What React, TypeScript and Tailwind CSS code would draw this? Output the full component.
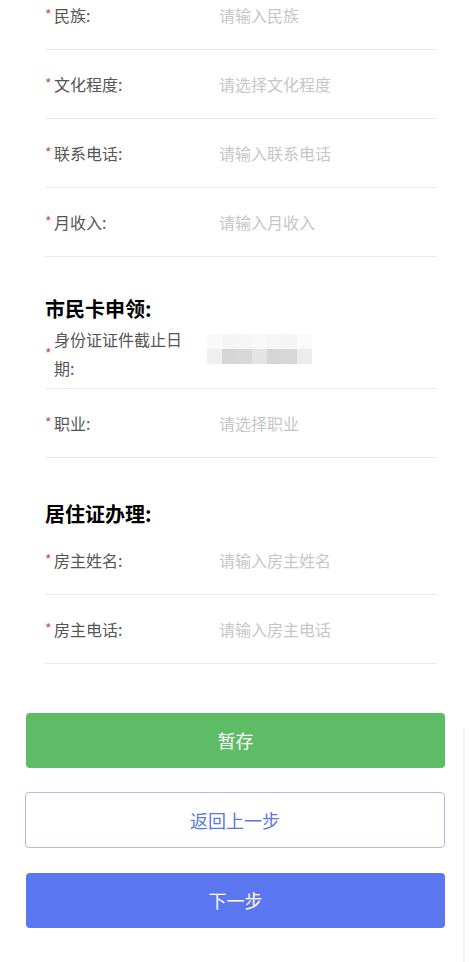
import React from 'react';

type Field = { label: string; placeholder: string };

const basicFields: Field[] = [
  { label: '民族', placeholder: '请输入民族' },
  { label: '文化程度', placeholder: '请选择文化程度' },
  { label: '联系电话', placeholder: '请输入联系电话' },
  { label: '月收入', placeholder: '请输入月收入' },
];

const ownerFields: Field[] = [
  { label: '房主姓名', placeholder: '请输入房主姓名' },
  { label: '房主电话', placeholder: '请输入房主电话' },
];

// pixelated (redacted) value blocks
const blurTop = ['#f9f9f9', '#f5f5f5', '#f6f6f6', '#f8f8f8', '#f6f6f6', '#f5f5f5', '#fafafa'];
const blurBottom = ['#efefef', '#d6d6d6', '#d8d8d8', '#e4e4e4', '#d5d5d5', '#d7d7d7', '#ececec'];

const FormRow: React.FC<{ label: React.ReactNode; children: React.ReactNode }> = ({ label, children }) => (
  <div className="h-[69px] flex items-center border-b border-[#e9e9e9]">
    <div className="w-[174px] shrink-0 flex items-center">
      <span className="w-[9px] shrink-0 text-[14px] leading-none text-[#d0503c] -mt-[3px]">*</span>
      <span className="max-w-[136px] text-[16px] leading-[29px] text-[#555555]">{label}</span>
    </div>
    {children}
  </div>
);

const Placeholder: React.FC<{ text: string }> = ({ text }) => (
  <span className="text-[16px] leading-[29px] text-[#c6c6c6]">{text}</span>
);

const SectionTitle: React.FC<{ text: string; className?: string }> = ({ text, className }) => (
  <h2 className={`h-[22px] text-[20px] leading-[22px] font-bold text-black ${className ?? ''}`}>{text}</h2>
);

export default function App() {
  return (
    <div className="relative min-h-[962px] bg-white overflow-hidden font-['Microsoft_YaHei','Noto_Sans_CJK_SC',sans-serif]">
      <div className="w-[392px] ml-[45px] -mt-[19px]">
        {basicFields.map((f) => (
          <FormRow key={f.label} label={`${f.label}:`}>
            <Placeholder text={f.placeholder} />
          </FormRow>
        ))}

        <SectionTitle text="市民卡申领:" className="mt-[41px]" />
        <FormRow label="身份证证件截止日期:">
          <div className="-ml-[12px] mb-[11px] grid grid-cols-7">
            {blurTop.map((c, i) => (
              <div key={`t${i}`} className="w-[15px] h-[15px]" style={{ backgroundColor: c }} />
            ))}
            {blurBottom.map((c, i) => (
              <div key={`b${i}`} className="w-[15px] h-[15px]" style={{ backgroundColor: c }} />
            ))}
          </div>
        </FormRow>
        <FormRow label="职业:">
          <Placeholder text="请选择职业" />
        </FormRow>

        <SectionTitle text="居住证办理:" className="mt-[45px]" />
        <div className="mt-[1px]">
          {ownerFields.map((f) => (
            <FormRow key={f.label} label={`${f.label}:`}>
              <Placeholder text={f.placeholder} />
            </FormRow>
          ))}
        </div>
      </div>

      {/* Action buttons */}
      <div className="w-[419px] ml-[26px] mt-[49px] flex flex-col">
        <button className="h-[55px] rounded-[4px] bg-[#5fbc66] text-white text-[18px]">暂存</button>
        <button className="h-[56px] mt-[24px] -ml-px w-[420px] rounded-[4px] border border-[#aebde6] bg-white text-[#5b78e0] text-[18px]">
          返回上一步
        </button>
        <button className="h-[55px] mt-[25px] rounded-[4px] bg-[#5a77ef] text-white text-[18px]">下一步</button>
      </div>

      {/* faint scroll edge on the right */}
      <div className="absolute right-[5px] top-[728px] bottom-0 w-[2px] bg-[#f3f3f3]" />
    </div>
  );
}
